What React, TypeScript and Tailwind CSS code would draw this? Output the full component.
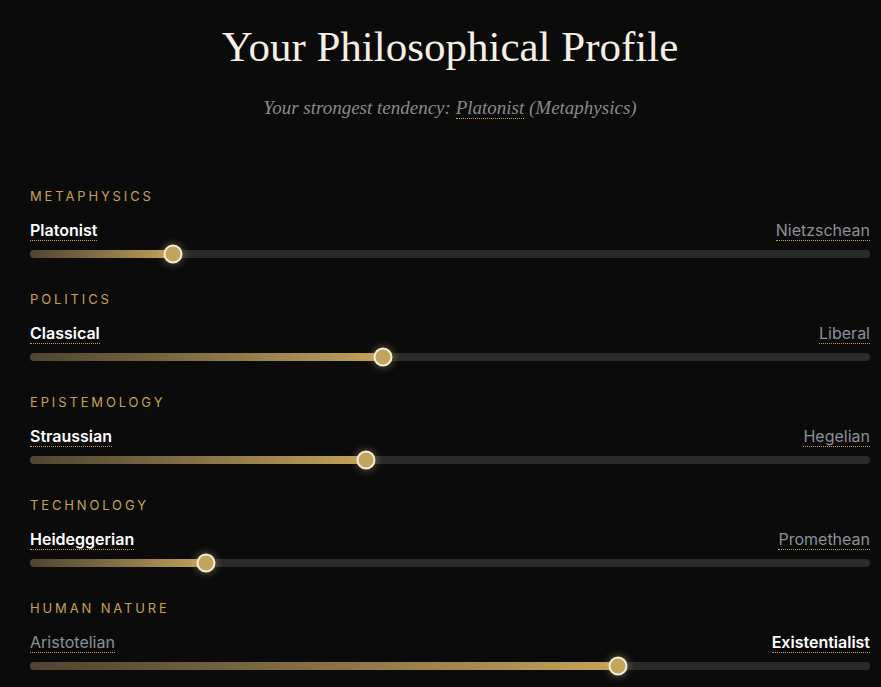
import React from "react";

type Axis = { name: string; left: string; right: string; value: number; active: "left" | "right" };

const axes: Axis[] = [
  { name: "Metaphysics", left: "Platonist", right: "Nietzschean", value: 17, active: "left" },
  { name: "Politics", left: "Classical", right: "Liberal", value: 42, active: "left" },
  { name: "Epistemology", left: "Straussian", right: "Hegelian", value: 40, active: "left" },
  { name: "Technology", left: "Heideggerian", right: "Promethean", value: 21, active: "left" },
  { name: "Human Nature", left: "Aristotelian", right: "Existentialist", value: 70, active: "right" },
];

function Label({ text, active }: { text: string; active: boolean }) {
  return (
    <span
      className={
        "inline-block border-b border-dotted border-[#c9a04e] text-[16px] leading-[19px] " +
        (active ? "font-semibold text-white" : "text-[#8d9097]")
      }
    >
      {text}
    </span>
  );
}

export default function App() {
  return (
    <div
      className="h-screen w-screen overflow-hidden bg-[#0b0b0b] pl-[30px] pt-[22px]"
      style={{ fontFamily: "Inter, 'Noto Sans', sans-serif" }}
    >
      <div className="w-[840px] shrink-0">
        <h1
          className="text-center text-[43px] leading-[50px] text-[#f6f0e4]"
          style={{ fontFamily: "'Liberation Serif', serif" }}
        >
          Your Philosophical Profile
        </h1>
        <p
          className="mt-[22px] text-center text-[19px] italic leading-[28px] text-[#8a8a8a]"
          style={{ fontFamily: "'Liberation Serif', serif" }}
        >
          Your strongest tendency:{" "}
          <span className="border-b border-dotted border-[#c9a04e]">Platonist</span> (Metaphysics)
        </p>
        <div className="mt-[66px] flex flex-col">
          {axes.map((a) => (
            <div key={a.name} className="h-[103px] shrink-0">
              <div className="text-[13px] uppercase leading-[16px] tracking-[0.22em] text-[#c6a257]">
                {a.name}
              </div>
              <div className="mt-[17px] flex items-start justify-between">
                <Label text={a.left} active={a.active === "left"} />
                <Label text={a.right} active={a.active === "right"} />
              </div>
              <div className="relative mt-[9px] h-2 rounded-full bg-[#2a2a2a]">
                <div
                  className="absolute inset-y-0 left-0 rounded-full bg-gradient-to-r from-[#4e4431] to-[#c4a35b]"
                  style={{ width: `${a.value}%` }}
                />
                <div
                  className="absolute top-1/2 h-[19px] w-[19px] -translate-x-1/2 -translate-y-1/2 rounded-full border-2 border-[#f4ecdc] bg-[#c4a35b] shadow-[0_0_8px_rgba(214,180,100,0.55)]"
                  style={{ left: `${a.value}%` }}
                />
              </div>
            </div>
          ))}
        </div>
      </div>
    </div>
  );
}
